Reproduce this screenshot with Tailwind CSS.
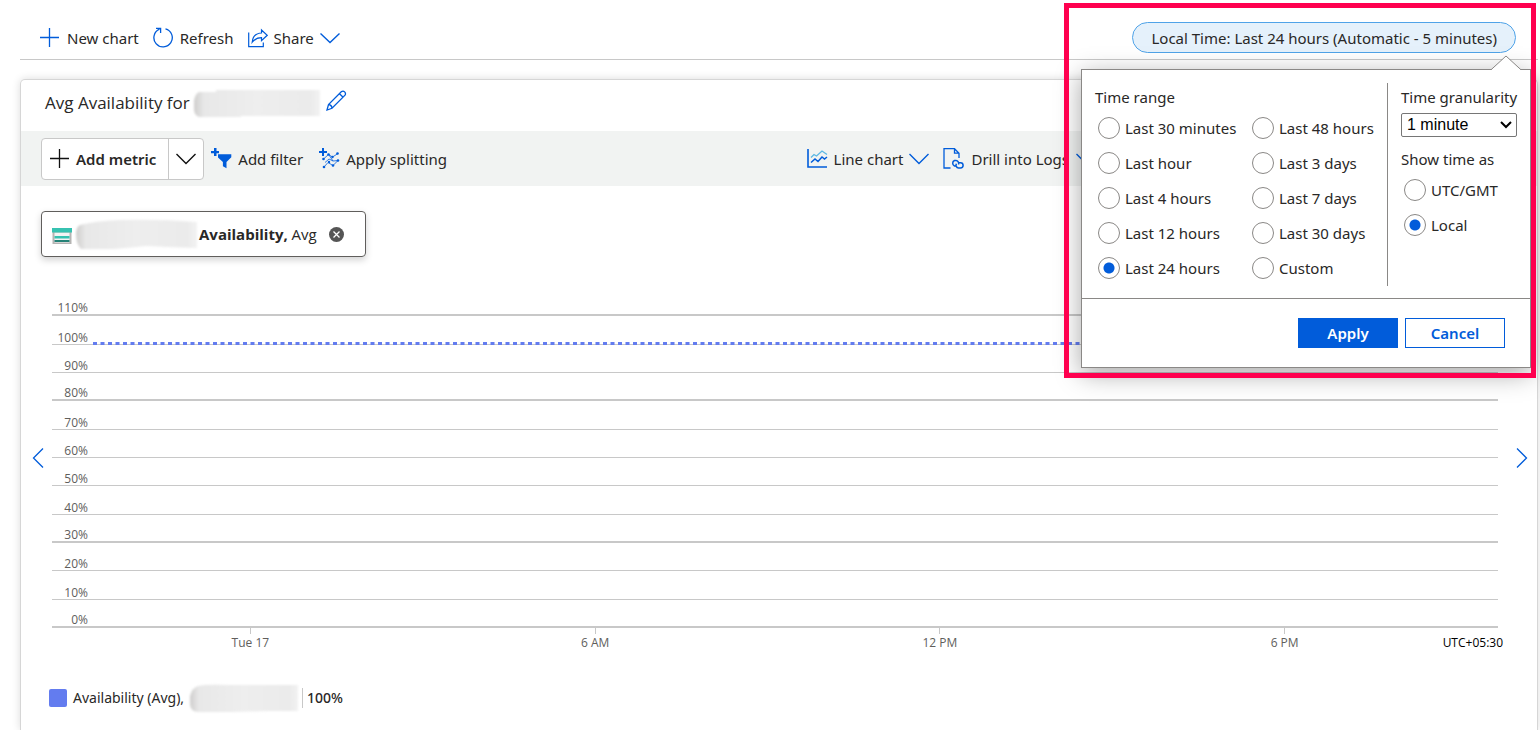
<!DOCTYPE html>
<html lang="en">
<head>
  <meta charset="utf-8" />
  <title>Metrics</title>
  <meta name="viewport" content="width=device-width, initial-scale=1" />
  <script src="https://cdn.jsdelivr.net/npm/@tailwindcss/browser@4"></script>
</head>
<body class="relative flex flex-col min-h-screen overflow-x-hidden bg-white text-[#292827] text-[15px] leading-5 font-['Segoe_UI','Noto_Sans',sans-serif]">

  <!-- Top commands -->
  <header class="flex items-center h-[60px] ml-5 mr-[2px] pt-4 pl-5 pr-[22px] border-b border-[#c8c8c8]">
    <button class="flex items-center gap-[7px] mr-[14px]">
      <svg class="size-5 text-[#015cda]" viewBox="0 0 20 20" fill="none" stroke="currentColor"><path d="M9.5 0v19M0 9.5h19" stroke-width="1.3" /></svg>
      New chart
    </button>
    <button class="flex items-center gap-[6px] mr-[14px]">
      <svg class="size-[21px] text-[#015cda]" viewBox="0 0 21 21" fill="none" stroke="currentColor" stroke-width="1.3"><path d="M12.500 1.800A9.200 9.200 0 1 1 6.500 2.200M3 1.400h4.600V6" /></svg>
      Refresh
    </button>
    <button class="flex items-center gap-[6px]">
      <svg class="size-5 text-[#015cda]" viewBox="0 0 20 20" fill="none" stroke="currentColor" stroke-width="1.2"><path d="M.7 4.500v14.200h14.600v-4.200M13.500 2l5.700 5.300-5.700 5.300V9.700c-4 0-6.500 1-9.300 4.500.5-5.500 4-9 9.300-9.200z" /></svg>
      Share
      <svg class="w-5 h-3 text-[#015cda]" viewBox="0 0 20 12" fill="none" stroke="currentColor" stroke-width="1.4"><path d="M.5 1.500l9.500 9 9.500-9" /></svg>
    </button>
    <button class="ml-auto h-[31px] px-[18px] rounded-full border border-[#4fa3e8] bg-[#e5f1fb] whitespace-nowrap">Local Time: Last 24 hours (Automatic - 5 minutes)</button>
  </header>

  <!-- Chart card -->
  <main class="flex-1 mt-[19px] ml-5 mr-[2px] border border-b-0 border-[#d6d6d6] rounded-t-[5px] shadow-[0_0_8px_rgba(0,0,0,0.14)]">
    <div class="flex items-center h-[51px] pl-6 pb-[10px]">
      <h1 class="text-[17px] pt-1 font-['Segoe_UI','Open_Sans',sans-serif]">Avg Availability for</h1>
      <svg class="w-[126px] h-7 ml-1 mr-[6px] mt-1 blur-[1px]" viewBox="0 0 126 28">
        <defs>
          <linearGradient id="smudge">
            <stop offset="0" stop-color="#cfcecd" /><stop offset=".08" stop-color="#e8e8e8" /><stop offset=".5" stop-color="#eeeeee" /><stop offset=".92" stop-color="#ebebeb" /><stop offset="1" stop-color="#f2f2f2" />
          </linearGradient>
        </defs>
        <path d="M0 12q1-7 5-9h17V1h104v26H47v1H5q-5-2-5-8z" fill="url(#smudge)" />
      </svg>
      <button aria-label="Edit title">
        <svg class="size-[21px] text-[#015cda]" viewBox="0 0 21 21" fill="none" stroke="currentColor" stroke-width="1.3"><path d="M1 20l1.500-5.500L15.500 1.600c2.200-1.600 5 1.200 3.500 3.500L6 18.300zM2.500 14.500c2 .2 3.300 1.500 3.500 3.800M13.500 3.700l3.600 3.600" /></svg>
      </button>
    </div>

    <div class="flex items-center h-[55px] pl-5 bg-[#f1f3f2] whitespace-nowrap">
      <div class="flex h-[42px] bg-white border border-[#c8c8c8] rounded-[4px] mr-[7px] font-semibold">
        <button class="flex items-center gap-[7px] pl-2 pr-3">
          <svg class="size-[19px]" viewBox="0 0 19 19" fill="none" stroke="#111"><path d="M9.500 0v19M0 9.500h19" stroke-width="1.300" /></svg>
          Add metric
        </button>
        <button class="flex items-center px-[7px] border-l border-[#c8c8c8]" aria-label="More metric options">
          <svg class="w-5 h-3" viewBox="0 0 20 12" fill="none" stroke="#111" stroke-width="1.400"><path d="M.5 1l9.500 9.500L19.500 1" /></svg>
        </button>
      </div>
      <button class="flex items-center gap-[6px] mr-4">
        <svg class="size-[21px]" viewBox="0 0 21 21" fill="#015cda"><path d="M3 0h2.500v3H8v2.200H5.500V8H3V5.200H0V3h3zM7 6.300h13.300v2.900l-4.800 4.800v6.300l-3.600-2V14L7 9.500z" /></svg>
        Add filter
      </button>
      <button class="flex items-center gap-[6px]">
        <svg class="size-[21px]" viewBox="0 0 21 21" fill="#015cda"><path d="M3 0h2v3h3v1.900H5V8H3V4.900H0V3h3z" /><path d="M4.500 11l5-4.500 4 2.500 5.500-3.500M6 14.500l4-3.500 4 2 5.500-.5M5 19l4-4.500 5 3 4.500-4.500M14 13l-4-6" stroke="#015cda" stroke-width=".8" fill="none" /><circle cx="9.500" cy="6.500" r="1.300" /><circle cx="18.500" cy="5.500" r="1.300" /><circle cx="4.500" cy="11" r="1.300" /><circle cx="13.500" cy="9" r="1.200" /><circle cx="10" cy="14" r="1.200" /><circle cx="19" cy="12.500" r="1.300" /><circle cx="5" cy="19" r="1.300" /><circle cx="14" cy="17.500" r="1.300" /></svg>
        Apply splitting
      </button>
      <div class="flex items-center ml-auto mr-[441px]">
        <button class="flex items-center gap-[6px] mr-[14px]">
          <svg class="size-[21px]" viewBox="0 0 21 21" fill="none"><path d="M4 9.500l3-3 2.500 1.500L15 3l5 3.500" stroke="#5cb8e4" stroke-width="1.300" /><path d="M4 14.500l4-3.500 3 2.500 4-4.500 2.500 2L20 9" stroke="#015cda" stroke-width="1.500" /><path d="M1 1v18h19" stroke="#015cda" stroke-width="1.600" /></svg>
          Line chart
          <svg class="w-5 h-3" viewBox="0 0 20 12" fill="none" stroke="#015cda" stroke-width="1.400"><path d="M.5 1l9.500 9.500L19.500 1" /></svg>
        </button>
        <button class="flex items-center gap-[7px]">
          <svg class="size-[21px]" viewBox="0 0 21 21" fill="none" stroke="#015cda" stroke-width="1.300"><path d="M7.500 20H1V.7h10.500L16 5.200V10M11.500.7v4.500H16" /><path d="M12.500 18H11.500a3 3 0 0 1 0-5.500h1.500a3 3 0 0 1 2.500 4M16 14.700h1.500a2.600 2.600 0 0 1 0 5.200h-2a2.600 2.600 0 0 1-2-4.200" stroke-width="1.500" /></svg>
          Drill into Logs
          <svg class="w-5 h-3" viewBox="0 0 20 12" fill="none" stroke="#015cda" stroke-width="1.400"><path d="M.5 1l9.500 9.500L19.500 1" /></svg>
        </button>
      </div>
    </div>

    <!-- Metric chip -->
    <div class="flex items-center w-[325px] h-[46px] mt-[25px] ml-5 pl-[10px] border border-[#605e5c] rounded-[4px] shadow-[0_3px_7px_rgba(0,0,0,0.18)] whitespace-nowrap font-['Segoe_UI','Open_Sans',sans-serif]">
      <svg class="w-5 h-4 mt-1 shrink-0" viewBox="0 0 20 16"><path d="M.5 4h19v12H.5z" fill="#b5b4b3" /><path d="M2.500 4.500h15v10h-15z" fill="#f4f4f4" /><path d="M0 0h20v4.500H0z" fill="#37c2b1" /><path d="M2.500 8h15v2.500h-15z" fill="#37c2b1" /><path d="M2.500 12h15v2h-15z" fill="#258277" /></svg>
      <svg class="w-[121px] h-[30px] ml-1 mr-[2px] shrink-0 blur-[1px]" viewBox="0 0 121 30"><path d="M0 15q0-7 4-9 15-4 40-5 40-1 77 2v26l-30-1-20-1-32 3H5q-5-5-5-15z" fill="url(#smudge)" /></svg>
      <span><b class="font-bold">Availability,</b> Avg</span>
      <button class="ml-3" aria-label="Remove metric">
        <svg class="size-[15px]" viewBox="0 0 15 15"><circle cx="7.500" cy="7.500" r="7.500" fill="#555" /><path d="M4.500 4.500l6 6m0-6l-6 6" stroke="#fff" stroke-width="1.300" /></svg>
      </button>
    </div>

    <!-- Chart -->
    <div class="flex items-center mt-[31px] pl-[11px] pr-[9px] font-['Segoe_UI','Open_Sans',sans-serif]">
      <button class="w-5 shrink-0" aria-label="Earlier">
        <svg class="w-3 h-5" viewBox="0 0 12 20" fill="none" stroke="#015cda" stroke-width="1.300"><path d="M11 .5L1.500 10l9.500 9.500" /></svg>
      </button>
      <div class="flex-1 grid grid-rows-12 h-[340px] text-xs leading-3 text-[#605e5c] *:flex *:items-end *:border-[#c8c8c8]">
        <div class="border-b-2"><span class="w-9 text-right">110%</span></div>
        <div class="relative border-b"><span class="w-9 text-right">100%</span>
          <svg class="absolute left-[41px] -bottom-px w-[calc(100%-41px)] h-[3px]"><line x1="0" y1="1.500" x2="100%" y2="1.500" stroke="#637cef" stroke-width="3" stroke-dasharray="4 3.500" /></svg>
        </div>
        <div class="border-b"><span class="w-9 text-right">90%</span></div>
        <div class="border-b-2"><span class="w-9 text-right">80%</span></div>
        <div class="border-b"><span class="w-9 text-right">70%</span></div>
        <div class="border-b"><span class="w-9 text-right">60%</span></div>
        <div class="border-b"><span class="w-9 text-right">50%</span></div>
        <div class="border-b"><span class="w-9 text-right">40%</span></div>
        <div class="border-b-2"><span class="w-9 text-right">30%</span></div>
        <div class="border-b"><span class="w-9 text-right">20%</span></div>
        <div class="border-b"><span class="w-9 text-right">10%</span></div>
        <div class="border-b-2"><span class="w-9 text-right">0%</span></div>
      </div>
      <button class="flex justify-end w-[30px] shrink-0" aria-label="Later">
        <svg class="w-3 h-5" viewBox="0 0 12 20" fill="none" stroke="#015cda" stroke-width="1.300"><path d="M1 .5l9.500 9.500L1 19.500" /></svg>
      </button>
    </div>
    <div class="relative grid grid-cols-4 ml-[57px] mr-[80px] text-xs leading-4 text-[#605e5c] font-['Segoe_UI','Open_Sans',sans-serif]">
      <div class="flex flex-col items-center gap-[1px]"><i class="w-px h-[6px] bg-[#c8c8c8]"></i>Tue 17</div>
      <div class="flex flex-col items-center gap-[1px]"><i class="w-px h-[6px] bg-[#c8c8c8]"></i>6 AM</div>
      <div class="flex flex-col items-center gap-[1px]"><i class="w-px h-[6px] bg-[#c8c8c8]"></i>12 PM</div>
      <div class="flex flex-col items-center gap-[1px]"><i class="w-px h-[6px] bg-[#c8c8c8]"></i>6 PM</div>
      <span class="absolute -right-[46px] bottom-0 text-black">UTC+05:30</span>
    </div>

    <!-- Legend -->
    <div class="flex items-center mt-8 pl-7 h-[30px] text-sm">
      <i class="size-[18px] mr-[6px] rounded-[2px] bg-[#637cef]"></i>
      Availability (Avg),
      <svg class="w-[108px] h-[29px] ml-[6px] mr-1 blur-[1px]" viewBox="0 0 108 29"><path d="M0 12Q2 4 8 2q8-2 30-1h70v26H78l-36 1H8q-8-1-8-8z" fill="url(#smudge)" /></svg>
      <span class="pl-1 border-l border-[#c8c8c8] font-medium">100%</span>
    </div>
  </main>

  <!-- Time picker -->
  <form class="absolute top-[69px] right-[9px] w-[450px] bg-white border border-[#8a8886] shadow-[0_6px_24px_rgba(0,0,0,0.35)]">
    <svg class="absolute -top-[15px] right-[8px] w-8 h-4" viewBox="0 0 32 16"><path d="M1 15L16 1l15 14v1H1z" fill="#fff" /><path d="M1 14.800L16 1l15 13.800" fill="none" stroke="#8a8886" /></svg>
    <div class="flex h-[229px] pt-[13px] pb-3 pl-[13px] border-b border-[#8a8886] whitespace-nowrap">
      <fieldset class="flex-1 pt-1 border-r border-[#8a8886]">
        <legend class="float-left w-full mb-[10px]">Time range</legend>
        <div class="clear-both grid grid-flow-col grid-rows-5 grid-cols-[154px_auto] gap-y-[13px] pl-[3px] [&_label]:flex [&_label]:items-center [&_label]:gap-[5px] [&_label]:h-[22px] [&_input]:size-[22px] [&_input]:appearance-none [&_input]:rounded-full [&_input]:border [&_input]:border-[#8a8886] [&_input]:checked:bg-[radial-gradient(circle,#015cda_5px,#fff_6px)]">
          <label><input type="radio" name="range" />Last 30 minutes</label>
          <label><input type="radio" name="range" />Last hour</label>
          <label><input type="radio" name="range" />Last 4 hours</label>
          <label><input type="radio" name="range" />Last 12 hours</label>
          <label><input type="radio" name="range" checked />Last 24 hours</label>
          <label><input type="radio" name="range" />Last 48 hours</label>
          <label><input type="radio" name="range" />Last 3 days</label>
          <label><input type="radio" name="range" />Last 7 days</label>
          <label><input type="radio" name="range" />Last 30 days</label>
          <label><input type="radio" name="range" />Custom</label>
        </div>
      </fieldset>
      <div class="w-[142px] pt-1 pl-[13px]">
        <label for="granularity" class="block mb-[6px]">Time granularity</label>
        <div class="relative w-[116px]">
          <select id="granularity" class="block appearance-none w-full h-6 pl-[5px] rounded-[2px] border border-[#767676] bg-white text-black text-base leading-5 font-['Liberation_Sans',Arial,sans-serif]"><option>1 minute</option></select>
          <svg class="absolute right-[5px] top-2 w-[12px] h-2 pointer-events-none" viewBox="0 0 12 8" fill="none" stroke="#000" stroke-width="2"><path d="M1 1l5 5 5-5" /></svg>
        </div>
        <fieldset class="mt-3 [&_label]:flex [&_label]:items-center [&_label]:gap-[5px] [&_label]:h-[22px] [&_label]:ml-[3px] [&_input]:size-[22px] [&_input]:appearance-none [&_input]:rounded-full [&_input]:border [&_input]:border-[#8a8886] [&_input]:checked:bg-[radial-gradient(circle,#015cda_5px,#fff_6px)]">
          <legend class="mb-[10px]">Show time as</legend>
          <div class="flex flex-col gap-[13px]">
            <label><input type="radio" name="zone" />UTC/GMT</label>
            <label><input type="radio" name="zone" checked />Local</label>
          </div>
        </fieldset>
      </div>
    </div>
    <div class="flex justify-end gap-[7px] pt-[19px] pb-[19px] pr-[25px] font-semibold">
      <button type="button" class="w-[100px] h-[30px] bg-[#015cda] text-white">Apply</button>
      <button type="button" class="w-[100px] h-[30px] border border-[#015cda] text-[#015cda]">Cancel</button>
    </div>
  </form>

  <!-- Highlight frame -->
  <div class="absolute top-[3px] right-1 w-[472px] h-[375px] border-[5px] border-[#ff004f] pointer-events-none"></div>
</body>
</html>
